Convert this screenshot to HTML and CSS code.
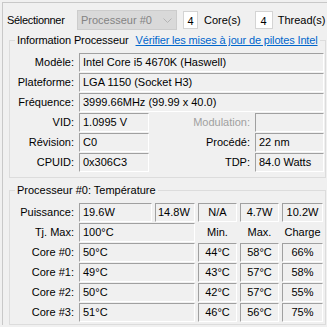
FILE: index.html
```html
<!DOCTYPE html>
<html lang="fr">
  <head>
    <meta charset="UTF-8" />
    <title>Processeur</title>
    <link rel="stylesheet" href="styles.css">
  </head>

  <body>
    <div class="tab">
      <div class="select-row">
        <span class="select-label">Sélectionner</span>
        <div class="combo">
          <span>Processeur #0</span>
          <svg class="arrow" width="9" height="5" viewBox="0 0 9 5">
            <path d="M0.5 0.5 L4.5 4.5 L8.5 0.5" fill="none" stroke="#b4b4b4" stroke-width="1" />
          </svg>
        </div>
        <span class="count count-core">4</span>
        <span class="count-label">Core(s)</span>
        <span class="count count-thread">4</span>
        <span class="count-label">Thread(s)</span>
      </div>

      <fieldset class="group">
        <legend><span class="legend-text">Information Processeur</span><a class="link" href="#">Vérifier les mises à jour de pilotes Intel</a></legend>

        <div class="info-grid">
          <span class="label">Modèle:</span>
          <span class="field wide">Intel Core i5 4670K (Haswell)</span>

          <span class="label">Plateforme:</span>
          <span class="field wide">LGA 1150 (Socket H3)</span>

          <span class="label">Fréquence:</span>
          <span class="field wide">3999.66MHz (99.99 x 40.0)</span>

          <span class="label">VID:</span>
          <span class="field">1.0995 V</span>
          <span class="label off">Modulation:</span>
          <span class="field"></span>

          <span class="label">Révision:</span>
          <span class="field">C0</span>
          <span class="label">Procédé:</span>
          <span class="field">22 nm</span>

          <span class="label">CPUID:</span>
          <span class="field">0x306C3</span>
          <span class="label">TDP:</span>
          <span class="field">84.0 Watts</span>
        </div>
      </fieldset>

      <fieldset class="group">
        <legend>Processeur #0: Température</legend>

        <div class="temp-grid">
          <span class="label">Puissance:</span>
          <span class="field">19.6W</span>
          <span class="field mid">14.8W</span>
          <span class="field center">N/A</span>
          <span class="field center">4.7W</span>
          <span class="field center">10.2W</span>

          <span class="label">Tj. Max:</span>
          <span class="field span2">100°C</span>
          <span class="head">Min.</span>
          <span class="head">Max.</span>
          <span class="head">Charge</span>

          <span class="label">Core #0:</span>
          <span class="field span2">50°C</span>
          <span class="field center">44°C</span>
          <span class="field center">58°C</span>
          <span class="field center">66%</span>

          <span class="label">Core #1:</span>
          <span class="field span2">49°C</span>
          <span class="field center">43°C</span>
          <span class="field center">57°C</span>
          <span class="field center">58%</span>

          <span class="label">Core #2:</span>
          <span class="field span2">50°C</span>
          <span class="field center">42°C</span>
          <span class="field center">57°C</span>
          <span class="field center">55%</span>

          <span class="label">Core #3:</span>
          <span class="field span2">51°C</span>
          <span class="field center">46°C</span>
          <span class="field center">56°C</span>
          <span class="field center">75%</span>
        </div>
      </fieldset>
    </div>
  </body>
</html>
```

FILE: styles.css
```css
body {
  margin: 0;
  background-color: #f0f0f0;
  font-family: "Liberation Sans", Arial, sans-serif;
  font-size: 11px;
  color: #000;
}

.tab {
  margin: 2px 0 0 2px;
  height: 323px;
  border-top: 1px solid #c8c8c8;
  border-left: 1px solid #c8c8c8;
  padding-left: 3px;
  box-sizing: border-box;
}

.select-row {
  display: flex;
  align-items: center;
  height: 20px;
  margin-top: 7px;
}

.select-label {
  width: 71px;
  padding-left: 1px;
  box-sizing: border-box;
  letter-spacing: -0.3px;
}

.combo {
  display: flex;
  align-items: center;
  justify-content: space-between;
  width: 100px;
  height: 20px;
  box-sizing: border-box;
  background-color: #d9d9d9;
  border: 1px solid #cccccc;
  color: #838383;
  padding: 0 4px 0 3px;
}

.count {
  width: 15px;
  height: 18px;
  line-height: 18px;
  margin: 0 6px 0 6px;
  box-sizing: border-box;
  background-color: #fff;
  border: 1px solid #d4d4d4;
  text-align: center;
}

.count-thread {
  width: 18px;
  margin-left: 14px;
  margin-right: 5px;
}

.count-label {
  line-height: 18px;
}

.group {
  margin: 4px 0 0 3px;
  width: 317px;
  box-sizing: border-box;
  border: 1px solid #dcdcdc;
  padding: 0 1px 5px 0;
  min-width: 0;
}

.group + .group {
  margin-top: 6px;
  padding-bottom: 2px;
}

legend {
  margin-left: 5px;
  padding: 0 2px;
  line-height: 13px;
  white-space: nowrap;
}

.legend-text {
  letter-spacing: -0.1px;
}

.link {
  margin-left: 7px;
  color: #0066cc;
  letter-spacing: -0.15px;
}

.info-grid {
  display: grid;
  grid-template-columns: 66px 70px 1fr 69px;
  grid-auto-rows: 19px;
  column-gap: 3px;
  row-gap: 1px;
  margin-top: 6px;
}

.temp-grid {
  display: grid;
  grid-template-columns: 66px 73px 40px 39px 39px 41px;
  grid-auto-rows: 19px;
  column-gap: 3px;
  row-gap: 1px;
  margin-top: 6px;
}

.label {
  line-height: 19px;
  text-align: right;
  padding-right: 2px;
  white-space: nowrap;
}

.off {
  color: #a0a0a0;
}

.field {
  border-top: 1px solid #a0a0a0;
  border-left: 1px solid #a0a0a0;
  border-right: 1px solid #fff;
  border-bottom: 1px solid #fff;
  padding-left: 3px;
  line-height: 17px;
  white-space: nowrap;
  overflow: hidden;
}

.wide {
  grid-column: 2 / 5;
}

.span2 {
  grid-column: 2 / 4;
}

.mid {
  padding-left: 2px;
}

.center {
  padding-left: 0;
  text-align: center;
}

.head {
  line-height: 19px;
  text-align: center;
}
```
